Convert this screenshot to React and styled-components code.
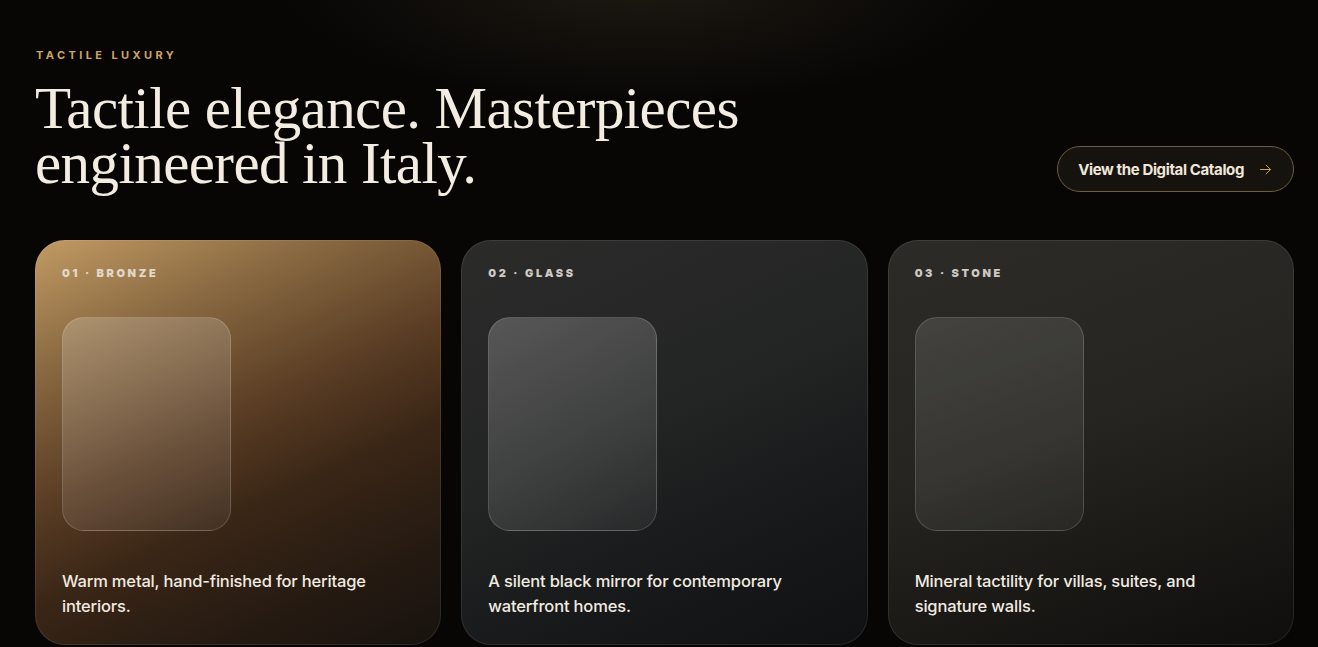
import React from "react";
import styled, { createGlobalStyle } from "styled-components";

const GlobalStyle = createGlobalStyle`
	* {
		box-sizing: border-box;
	}
	body {
		margin: 0;
		background: #070605;
		color: #f1ebe0;
		font-family: Inter, "Noto Sans", sans-serif;
	}
`;

const Page = styled.section`
	min-height: 647px;
	padding: 48px 24px 0 35px;
	background:
		radial-gradient(ellipse 520px 180px at 640px -20px, rgba(120, 100, 70, 0.2), transparent 70%),
		#070605;
	overflow: hidden;
`;

const Header = styled.div`
	display: flex;
	align-items: flex-end;
	justify-content: space-between;
`;

const Eyebrow = styled.p`
	margin: 0 0 19px 1px;
	font-size: 11px;
	font-weight: 700;
	letter-spacing: 0.31em;
	color: #d0a463;
	text-transform: uppercase;
`;

const Title = styled.h1`
	margin: 0;
	font-family: "Liberation Serif", "DejaVu Serif", serif;
	font-weight: 400;
	font-size: 59px;
	line-height: 55px;
	letter-spacing: -0.01em;
	color: #f3ece0;
	max-width: 780px;
`;

const CatalogButton = styled.a`
	display: inline-flex;
	align-items: center;
	gap: 14px;
	height: 46px;
	padding: 0 20px;
	margin-bottom: -1px;
	border-radius: 999px;
	border: 1px solid #6f5b3d;
	background: #16130f;
	color: #efe7da;
	font-size: 15px;
	font-weight: 700;
	letter-spacing: -0.025em;
	text-decoration: none;
`;

const Arrow = styled.svg`
	width: 15px;
	height: 15px;
	color: #c9a066;
`;

const Grid = styled.div`
	display: grid;
	grid-template-columns: repeat(3, 1fr);
	gap: 20px;
	margin-top: 49px;
`;

const Card = styled.article`
	display: flex;
	flex-direction: column;
	height: 405px;
	padding: 25px 26px 25px;
	border-radius: 30px;
	border: 1px solid rgba(255, 255, 255, 0.09);
	background: ${(props) => props.bg};
	background-origin: border-box;
`;

const CardLabel = styled.span`
	font-size: 11px;
	font-weight: 900;
	letter-spacing: 0.24em;
	color: rgba(238, 232, 224, 0.85);
`;

const Swatch = styled.div`
	width: 169px;
	height: 214px;
	margin-top: 37px;
	border-radius: 22px;
	border: 1px solid rgba(255, 255, 255, 0.16);
	background: ${(props) => props.tint};
`;

const Description = styled.p`
	margin: auto 0 0;
	font-size: 16.5px;
	line-height: 25px;
	font-weight: 500;
	letter-spacing: -0.01em;
	color: #f1ebe0;
	max-width: 345px;
`;

const materials = [
	{
		label: "01 · BRONZE",
		text: "Warm metal, hand-finished for heritage interiors.",
		bg: "linear-gradient(155deg, #c29b63 0%, #8a6a42 22%, #5a3d24 45%, #3a2616 62%, #271b12 80%, #17120e 100%)",
		tint: "linear-gradient(160deg, rgba(255,255,255,0.2), rgba(255,255,255,0.06))",
	},
	{
		label: "02 · GLASS",
		text: "A silent black mirror for contemporary waterfront homes.",
		bg: "linear-gradient(155deg, #2b2b2a 0%, #232424 45%, #161819 75%, #0f1112 100%)",
		tint: "linear-gradient(150deg, rgba(255,255,255,0.22), rgba(255,255,255,0.06))",
	},
	{
		label: "03 · STONE",
		text: "Mineral tactility for villas, suites, and signature walls.",
		bg: "linear-gradient(160deg, #2c2b27 0%, #262521 45%, #191815 75%, #0f0e0d 100%)",
		tint: "linear-gradient(160deg, rgba(255,255,255,0.12), rgba(255,255,255,0.05))",
	},
];

const App = () => (
	<>
		<GlobalStyle />
		<Page>
			<Header>
				<div>
					<Eyebrow>Tactile Luxury</Eyebrow>
					<Title>Tactile elegance. Masterpieces engineered in Italy.</Title>
				</div>
				<CatalogButton href="#catalog">
					View the Digital Catalog
					<Arrow viewBox="0 0 24 24" fill="none" stroke="currentColor" strokeWidth="1.6" strokeLinecap="round" strokeLinejoin="round">
						<path d="M4 12h16" />
						<path d="M13 5l7 7-7 7" />
					</Arrow>
				</CatalogButton>
			</Header>
			<Grid>
				{materials.map((m) => (
					<Card key={m.label} bg={m.bg}>
						<CardLabel>{m.label}</CardLabel>
						<Swatch tint={m.tint} />
						<Description>{m.text}</Description>
					</Card>
				))}
			</Grid>
		</Page>
	</>
);

export default App;
